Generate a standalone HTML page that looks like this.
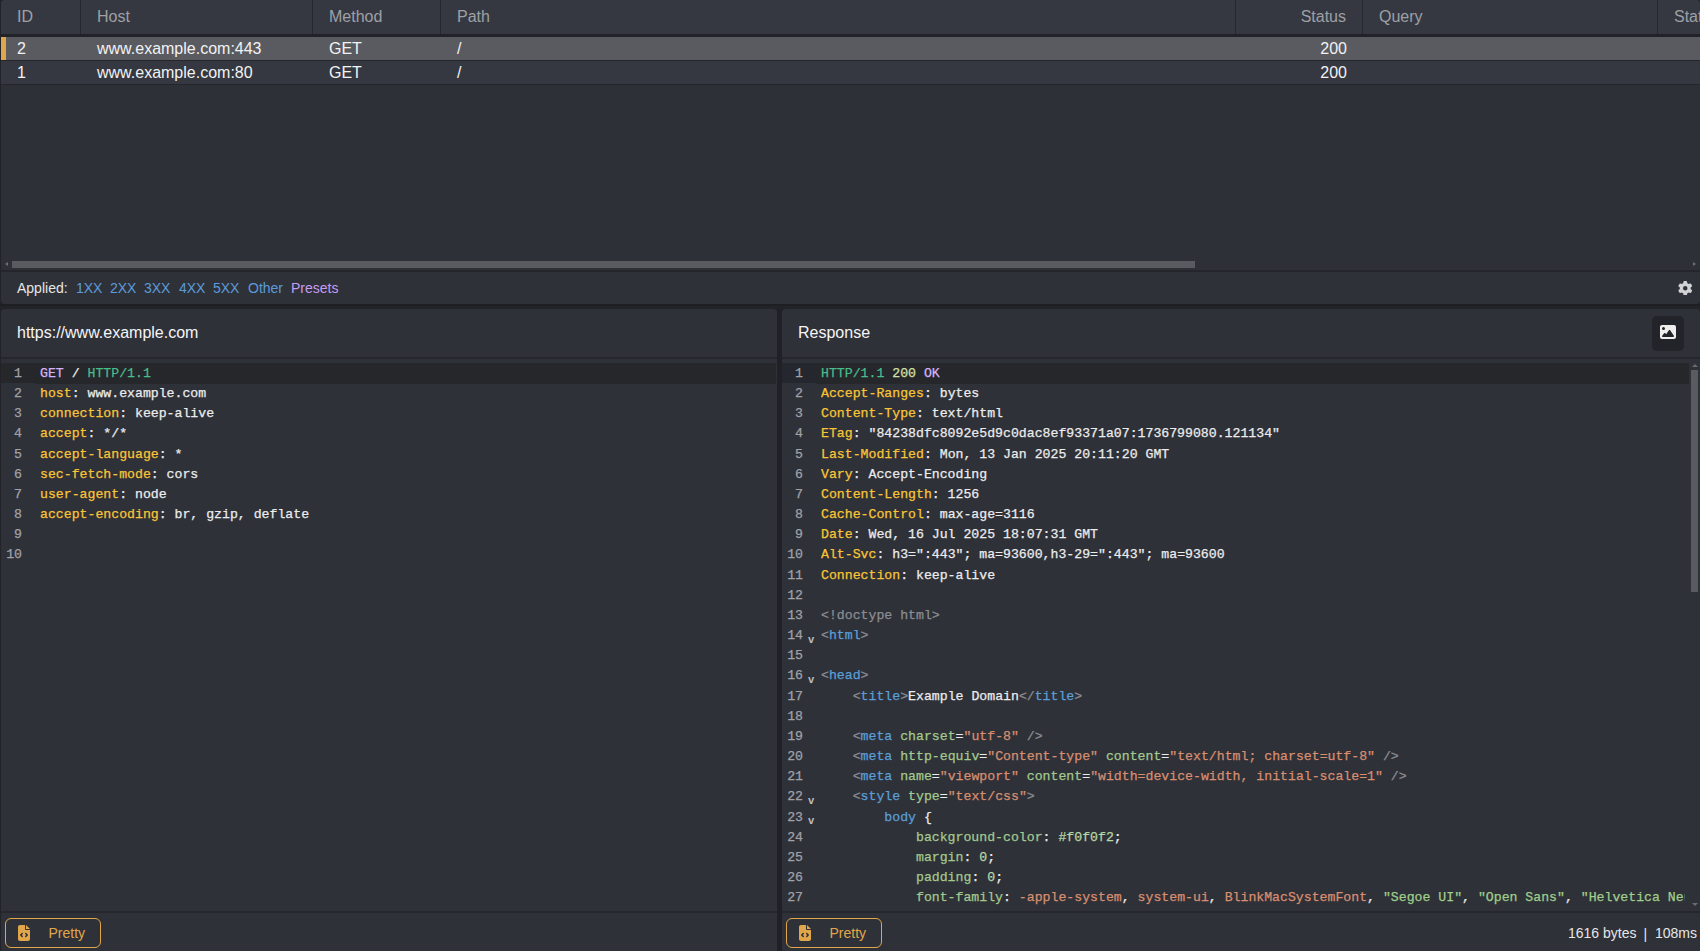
<!DOCTYPE html>
<html><head><meta charset="utf-8">
<style>
*{box-sizing:border-box;margin:0;padding:0}
html,body{width:1700px;height:951px;overflow:hidden;background:#222328;font-family:"Liberation Sans",sans-serif;color:#f0f0f0}
.abs{position:absolute}
#table{left:1px;top:0;width:1699px;height:270px;background:#2e3038;border-radius:4px 4px 0 0;overflow:hidden}
#thead{left:0;top:0;width:1699px;height:34px;background:#353841}
#thead .h{position:absolute;top:0;height:34px;line-height:34px;font-size:16px;color:#9ea0a6;border-right:1px solid #26282d;padding-left:16px;white-space:nowrap}
#hsep{left:0;top:34px;width:1699px;height:3px;background:#222328}
.row{position:absolute;left:0;width:1699px;height:24px;background:#353841;border-bottom:1px solid #24262b;font-size:16px;color:#f2f2f2}
.row.sel{background:#5a5b61}
.row .c{position:absolute;top:0;line-height:23px;white-space:nowrap}
.row .bar{position:absolute;left:0;top:0;width:5px;height:23px;background:#e2a64a}
#hscroll{left:12px;top:261px;width:1183px;height:7px;background:#5a5b61}
#tsep{left:1px;top:270px;width:1699px;height:2px;background:#25262b}
#filter{left:1px;top:272px;width:1699px;height:32px;background:#2f3139;border-radius:0 0 4px 4px;font-size:14px}
#filter span{position:absolute;top:0;line-height:32px;white-space:nowrap}
.pane{top:309px;height:642px;background:#2f3139;border-radius:4px 4px 0 0;overflow:hidden}
#req{left:1px;width:776px}
#res{left:782px;width:918px}
.ph{position:absolute;left:0;top:0;width:100%;height:48px;font-size:16px;color:#f5f5f5;line-height:48px;padding-left:16px}
.phsep{position:absolute;left:0;top:48px;width:100%;height:2px;background:#26272c}
.code{position:absolute;left:0;right:0;top:54px;height:548px;overflow:hidden;font-family:"Liberation Mono",monospace;font-size:13.2px;line-height:20.16px;color:#e8e8e8;white-space:pre;-webkit-text-stroke:0.25px currentColor}
.ln{position:absolute;left:0;width:21px;text-align:right;color:#a0a2a8}
.tx{position:absolute;left:39px;right:15.5px;overflow:hidden}
.act{position:absolute;left:34px;top:0;height:21px;right:1px;background:#26272b}
.actg{position:absolute;left:0;top:0;height:20px;width:34px;background:#26272b}
#res .act{right:11px}
#res .actg{background:#24272e}
.fsep{position:absolute;left:0;top:602px;width:100%;height:2px;background:#26272c}
.btn{position:absolute;left:4px;top:609px;width:96px;height:30px;border:1px solid #e2a64a;border-radius:6px;color:#e2a64a;font-size:14px}
.btn span{position:absolute;left:42.5px;top:0;line-height:28px}
.btn svg{position:absolute;left:12px;top:6px}
.cs2{color:#9fcf8a}.k{color:#f9c536}.w{color:#ececec}.g{color:#47bd8b}.p{color:#d7b3fb}.n{color:#d3e0a8}
.gr{color:#8b8d92}.tb{color:#5a9fd8}.at{color:#a3c98e}.st{color:#d88e6f}.cs{color:#a3c98e}.nm{color:#b8d7a4}
.fold{position:absolute;left:26px;margin-top:3.5px;font-size:10.5px;font-weight:bold;color:#bfbfbf;-webkit-text-stroke:0}
</style></head><body>

<div id="table" class="abs">
  <div id="thead" class="abs">
    <div class="h" style="left:0;width:80px">ID</div>
    <div class="h" style="left:80px;width:232px">Host</div>
    <div class="h" style="left:312px;width:128px">Method</div>
    <div class="h" style="left:440px;width:795px">Path</div>
    <div class="h" style="left:1235px;width:127px;text-align:right;padding-right:16px">Status</div>
    <div class="h" style="left:1362px;width:295px">Query</div>
    <div class="h" style="left:1657px;width:100px">Stat</div>
  </div>
  <div id="hsep" class="abs"></div>
  <div class="row sel" style="top:37px">
    <div class="bar"></div>
    <div class="c" style="left:16px">2</div>
    <div class="c" style="left:96px">www.example.com:443</div>
    <div class="c" style="left:328px">GET</div>
    <div class="c" style="left:456px">/</div>
    <div class="c" style="left:1235px;width:111px;text-align:right">200</div>
  </div>
  <div class="row" style="top:61px">
    <div class="c" style="left:16px">1</div>
    <div class="c" style="left:96px">www.example.com:80</div>
    <div class="c" style="left:328px">GET</div>
    <div class="c" style="left:456px">/</div>
    <div class="c" style="left:1235px;width:111px;text-align:right">200</div>
  </div>
</div>
<div id="hscroll" class="abs"></div>
<div id="tsep" class="abs"></div>
<div id="filter" class="abs">
  <span style="left:16px;color:#e6e6e6">Applied:</span>
  <span style="left:75px;color:#5b9bd9">1XX</span>
  <span style="left:109px;color:#5b9bd9">2XX</span>
  <span style="left:143px;color:#5b9bd9">3XX</span>
  <span style="left:178px;color:#5b9bd9">4XX</span>
  <span style="left:212px;color:#5b9bd9">5XX</span>
  <span style="left:247px;color:#5b9bd9">Other</span>
  <span style="left:290px;color:#c69cf2">Presets</span>
</div>

<div class="abs" style="left:0;top:304px;width:1700px;height:2px;background:#1e1f23"></div>
<div id="req" class="pane abs">
  <div class="ph">https://www.example.com</div>
  <div class="phsep"></div>
  <div class="code" id="reqcode"><div class="act"></div><div class="actg"></div>
<div class="ln" style="top:1.00px">1</div>
<div class="tx" style="top:1.00px"><span class="p">GET</span><span class="w"> / </span><span class="g">HTTP/1.1</span></div>
<div class="ln" style="top:21.16px">2</div>
<div class="tx" style="top:21.16px"><span class="k">host</span><span class="w">: www.example.com</span></div>
<div class="ln" style="top:41.32px">3</div>
<div class="tx" style="top:41.32px"><span class="k">connection</span><span class="w">: keep-alive</span></div>
<div class="ln" style="top:61.48px">4</div>
<div class="tx" style="top:61.48px"><span class="k">accept</span><span class="w">: */*</span></div>
<div class="ln" style="top:81.64px">5</div>
<div class="tx" style="top:81.64px"><span class="k">accept-language</span><span class="w">: *</span></div>
<div class="ln" style="top:101.80px">6</div>
<div class="tx" style="top:101.80px"><span class="k">sec-fetch-mode</span><span class="w">: cors</span></div>
<div class="ln" style="top:121.96px">7</div>
<div class="tx" style="top:121.96px"><span class="k">user-agent</span><span class="w">: node</span></div>
<div class="ln" style="top:142.12px">8</div>
<div class="tx" style="top:142.12px"><span class="k">accept-encoding</span><span class="w">: br, gzip, deflate</span></div>
<div class="ln" style="top:162.28px">9</div>
<div class="ln" style="top:182.44px">10</div></div>
  <div class="fsep"></div>
  <div class="btn"><svg width="12" height="16" viewBox="0 0 384 512"><path fill="#e2a64a" fill-rule="evenodd" d="M64 0C28.7 0 0 28.7 0 64V448c0 35.3 28.7 64 64 64H320c35.3 0 64-28.7 64-64V160H256c-17.7 0-32-14.3-32-32V0H64zM256 0V128H384L256 0zM153 289l-31 31 31 31c9.4 9.4 9.4 24.6 0 33.9s-24.6 9.4-33.9 0L71 337c-9.4-9.4-9.4-24.6 0-33.9l48-48c9.4-9.4 24.6-9.4 33.9 0s9.4 24.6 0 33.9zM265 255l48 48c9.4 9.4 9.4 24.6 0 33.9l-48 48c-9.4 9.4-24.6 9.4-33.9 0s-9.4-24.6 0-33.9l31-31-31-31c-9.4-9.4-9.4-24.6 0-33.9s24.6-9.4 33.9 0z"/></svg><span>Pretty</span></div>
</div>

<div id="res" class="pane abs">
  <div class="ph">Response</div>
  <div class="phsep"></div>
  <div class="code" id="rescode"><div class="act"></div><div class="actg"></div>
<div class="ln" style="top:1.00px">1</div>
<div class="tx" style="top:1.00px"><span class="g">HTTP/1.1</span><span class="w"> </span><span class="n">200</span><span class="w"> </span><span class="p">OK</span></div>
<div class="ln" style="top:21.16px">2</div>
<div class="tx" style="top:21.16px"><span class="k">Accept-Ranges</span><span class="w">: bytes</span></div>
<div class="ln" style="top:41.32px">3</div>
<div class="tx" style="top:41.32px"><span class="k">Content-Type</span><span class="w">: text/html</span></div>
<div class="ln" style="top:61.48px">4</div>
<div class="tx" style="top:61.48px"><span class="k">ETag</span><span class="w">: "84238dfc8092e5d9c0dac8ef93371a07:1736799080.121134"</span></div>
<div class="ln" style="top:81.64px">5</div>
<div class="tx" style="top:81.64px"><span class="k">Last-Modified</span><span class="w">: Mon, 13 Jan 2025 20:11:20 GMT</span></div>
<div class="ln" style="top:101.80px">6</div>
<div class="tx" style="top:101.80px"><span class="k">Vary</span><span class="w">: Accept-Encoding</span></div>
<div class="ln" style="top:121.96px">7</div>
<div class="tx" style="top:121.96px"><span class="k">Content-Length</span><span class="w">: 1256</span></div>
<div class="ln" style="top:142.12px">8</div>
<div class="tx" style="top:142.12px"><span class="k">Cache-Control</span><span class="w">: max-age=3116</span></div>
<div class="ln" style="top:162.28px">9</div>
<div class="tx" style="top:162.28px"><span class="k">Date</span><span class="w">: Wed, 16 Jul 2025 18:07:31 GMT</span></div>
<div class="ln" style="top:182.44px">10</div>
<div class="tx" style="top:182.44px"><span class="k">Alt-Svc</span><span class="w">: h3=":443"; ma=93600,h3-29=":443"; ma=93600</span></div>
<div class="ln" style="top:202.60px">11</div>
<div class="tx" style="top:202.60px"><span class="k">Connection</span><span class="w">: keep-alive</span></div>
<div class="ln" style="top:222.76px">12</div>
<div class="ln" style="top:242.92px">13</div>
<div class="tx" style="top:242.92px"><span class="gr">&lt;!doctype html&gt;</span></div>
<div class="ln" style="top:263.08px">14</div>
<div class="fold" style="top:263.08px">v</div>
<div class="tx" style="top:263.08px"><span class="gr">&lt;</span><span class="tb">html</span><span class="gr">&gt;</span></div>
<div class="ln" style="top:283.24px">15</div>
<div class="ln" style="top:303.40px">16</div>
<div class="fold" style="top:303.40px">v</div>
<div class="tx" style="top:303.40px"><span class="gr">&lt;</span><span class="tb">head</span><span class="gr">&gt;</span></div>
<div class="ln" style="top:323.56px">17</div>
<div class="tx" style="top:323.56px"><span class="w">    </span><span class="gr">&lt;</span><span class="tb">title</span><span class="gr">&gt;</span><span class="w">Example Domain</span><span class="gr">&lt;/</span><span class="tb">title</span><span class="gr">&gt;</span></div>
<div class="ln" style="top:343.72px">18</div>
<div class="ln" style="top:363.88px">19</div>
<div class="tx" style="top:363.88px"><span class="w">    </span><span class="gr">&lt;</span><span class="tb">meta</span><span class="w"> </span><span class="at">charset</span><span class="w">=</span><span class="st">"utf-8"</span><span class="gr"> /&gt;</span></div>
<div class="ln" style="top:384.04px">20</div>
<div class="tx" style="top:384.04px"><span class="w">    </span><span class="gr">&lt;</span><span class="tb">meta</span><span class="w"> </span><span class="at">http-equiv</span><span class="w">=</span><span class="st">"Content-type"</span><span class="w"> </span><span class="at">content</span><span class="w">=</span><span class="st">"text/html; charset=utf-8"</span><span class="gr"> /&gt;</span></div>
<div class="ln" style="top:404.20px">21</div>
<div class="tx" style="top:404.20px"><span class="w">    </span><span class="gr">&lt;</span><span class="tb">meta</span><span class="w"> </span><span class="at">name</span><span class="w">=</span><span class="st">"viewport"</span><span class="w"> </span><span class="at">content</span><span class="w">=</span><span class="st">"width=device-width, initial-scale=1"</span><span class="gr"> /&gt;</span></div>
<div class="ln" style="top:424.36px">22</div>
<div class="fold" style="top:424.36px">v</div>
<div class="tx" style="top:424.36px"><span class="w">    </span><span class="gr">&lt;</span><span class="tb">style</span><span class="w"> </span><span class="at">type</span><span class="w">=</span><span class="st">"text/css"</span><span class="gr">&gt;</span></div>
<div class="ln" style="top:444.52px">23</div>
<div class="fold" style="top:444.52px">v</div>
<div class="tx" style="top:444.52px"><span class="w">        </span><span class="tb">body</span><span class="w"> {</span></div>
<div class="ln" style="top:464.68px">24</div>
<div class="tx" style="top:464.68px"><span class="w">            </span><span class="cs">background-color</span><span class="w">: </span><span class="nm">#f0f0f2</span><span class="w">;</span></div>
<div class="ln" style="top:484.84px">25</div>
<div class="tx" style="top:484.84px"><span class="w">            </span><span class="cs">margin</span><span class="w">: </span><span class="nm">0</span><span class="w">;</span></div>
<div class="ln" style="top:505.00px">26</div>
<div class="tx" style="top:505.00px"><span class="w">            </span><span class="cs">padding</span><span class="w">: </span><span class="nm">0</span><span class="w">;</span></div>
<div class="ln" style="top:525.16px">27</div>
<div class="tx" style="top:525.16px"><span class="w">            </span><span class="cs">font-family</span><span class="w">: </span><span class="st">-apple-system</span><span class="w">, </span><span class="st">system-ui</span><span class="w">, </span><span class="st">BlinkMacSystemFont</span><span class="w">, </span><span class="cs2">"Segoe UI"</span><span class="w">, </span><span class="cs2">"Open Sans"</span><span class="w">, </span><span class="cs2">"Helvetica Neue"</span><span class="w">, Helvetica, Arial, sans-serif;</span></div></div>
  <div class="fsep"></div>
  <div class="btn"><svg width="12" height="16" viewBox="0 0 384 512"><path fill="#e2a64a" fill-rule="evenodd" d="M64 0C28.7 0 0 28.7 0 64V448c0 35.3 28.7 64 64 64H320c35.3 0 64-28.7 64-64V160H256c-17.7 0-32-14.3-32-32V0H64zM256 0V128H384L256 0zM153 289l-31 31 31 31c9.4 9.4 9.4 24.6 0 33.9s-24.6 9.4-33.9 0L71 337c-9.4-9.4-9.4-24.6 0-33.9l48-48c9.4-9.4 24.6-9.4 33.9 0s9.4 24.6 0 33.9zM265 255l48 48c9.4 9.4 9.4 24.6 0 33.9l-48 48c-9.4 9.4-24.6 9.4-33.9 0s-9.4-24.6 0-33.9l31-31-31-31c-9.4-9.4-9.4-24.6 0-33.9s24.6-9.4 33.9 0z"/></svg><span>Pretty</span></div>
</div>

<div class="abs" style="left:5px;top:262px;width:0;height:0;border-top:2.5px solid transparent;border-bottom:2.5px solid transparent;border-right:3px solid #6b6d73"></div>
<div class="abs" style="left:1693px;top:262px;width:0;height:0;border-top:2.5px solid transparent;border-bottom:2.5px solid transparent;border-left:3px solid #6b6d73"></div>
<svg class="abs" style="left:1678px;top:280.5px" width="14.5" height="14.5" viewBox="0 0 512 512"><path fill="#d2d2d4" d="M495.9 166.6c3.2 8.7 .5 18.4-6.4 24.6l-43.3 39.4c1.1 8.3 1.7 16.8 1.7 25.4s-.6 17.1-1.7 25.4l43.3 39.4c6.9 6.2 9.6 15.9 6.4 24.6c-4.4 11.9-9.7 23.3-15.8 34.3l-4.7 8.1c-6.6 11-14 21.4-22.1 31.2c-5.900 7.2-15.7 9.6-24.5 6.8l-55.7-17.7c-13.4 10.3-28.2 18.9-44 25.4l-12.5 57.1c-2 9.1-9 16.3-18.2 17.8c-13.8 2.3-28 3.5-42.5 3.5s-28.7-1.2-42.5-3.5c-9.2-1.5-16.2-8.7-18.2-17.8l-12.5-57.1c-15.8-6.5-30.6-15.1-44-25.4L83.1 425.9c-8.8 2.8-18.600 .3-24.5-6.8c-8.1-9.8-15.5-20.2-22.1-31.2l-4.7-8.1c-6.1-11-11.4-22.4-15.8-34.3c-3.2-8.7-.5-18.4 6.4-24.6l43.3-39.4C64.6 273.1 64 264.6 64 256s.6-17.1 1.7-25.4L22.4 191.2c-6.9-6.2-9.6-15.9-6.4-24.6c4.4-11.9 9.7-23.3 15.8-34.3l4.7-8.1c6.6-11 14-21.4 22.1-31.2c5.9-7.2 15.7-9.6 24.5-6.8l55.7 17.7c13.4-10.3 28.2-18.9 44-25.4l12.5-57.1c2-9.1 9-16.3 18.2-17.8C227.300 1.2 241.5 0 256 0s28.7 1.2 42.5 3.5c9.2 1.5 16.2 8.7 18.2 17.8l12.5 57.1c15.8 6.5 30.6 15.1 44 25.4l55.7-17.7c8.8-2.8 18.6-.3 24.5 6.8c8.1 9.8 15.5 20.2 22.1 31.2l4.7 8.1c6.1 11 11.4 22.4 15.8 34.3zM256 336a80 80 0 1 0 0-160 80 80 0 1 0 0 160z"/></svg>
<div class="abs" style="left:1652px;top:316px;width:32px;height:35px;background:#232429;border-radius:5px"></div>
<svg class="abs" style="left:1660px;top:325px" width="16" height="14" viewBox="0 32 512 448"><path fill="#f0eeec" fill-rule="evenodd" d="M0 96C0 60.7 28.7 32 64 32H448c35.3 0 64 28.7 64 64V416c0 35.3-28.7 64-64 64H64c-35.3 0-64-28.7-64-64V96zM323.8 202.5c-4.5-6.6-11.9-10.5-19.8-10.5s-15.4 3.9-19.8 10.5l-87 127.6L170.7 297c-4.6-5.7-11.5-9-18.7-9s-14.2 3.3-18.7 9l-64 80c-5.8 7.2-6.9 17.1-2.9 25.4s12.4 13.6 21.6 13.6h96 32H424c8.9 0 17.1-4.9 21.2-12.8s3.600-17.4-1.4-24.7l-120-176zM112 192a48 48 0 1 0 0-96 48 48 0 1 0 0 96z"/></svg>
<div class="abs" style="left:1691.5px;top:363.5px;width:0;height:0;border-left:3px solid transparent;border-right:3px solid transparent;border-bottom:3.5px solid #6a6b70"></div>
<div class="abs" style="left:1691px;top:370px;width:7px;height:222px;background:#5a5b61"></div>
<div class="abs" style="left:1691.5px;top:902.5px;width:0;height:0;border-left:3px solid transparent;border-right:3px solid transparent;border-top:3.5px solid #6a6b70"></div>
<div class="abs" style="left:777px;top:309px;width:5px;height:642px;background:#202126"></div>
<div class="abs" style="font-size:14px;color:#e6e6e6;top:925px;left:1568px;line-height:16px;white-space:nowrap">1616 bytes</div>
<div class="abs" style="font-size:14px;color:#e6e6e6;top:926px;left:1643.5px;line-height:16px">|</div>
<div class="abs" style="font-size:14px;color:#e6e6e6;top:925px;left:1655px;line-height:16px">108ms</div>

</body></html>
